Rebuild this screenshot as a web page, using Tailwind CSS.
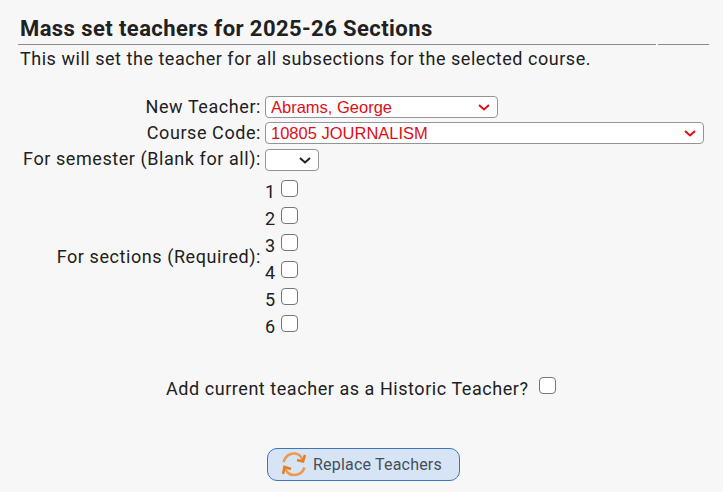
<!DOCTYPE html>
<html lang="en">
<head>
  <meta charset="UTF-8" />
  <title>Mass set teachers</title>
  <script src="https://cdn.jsdelivr.net/npm/@tailwindcss/browser@4"></script>
</head>
<body class="bg-[#f7f7f7] text-[#212121] font-['Roboto',sans-serif] w-[723px] h-[492px] overflow-hidden">

  <div class="pt-[15px]">
    <!-- Heading -->
    <h1 class="pl-[20px] text-[22px] leading-[28px] font-bold tracking-[0.42px]">Mass set teachers for 2025-26 Sections</h1>
    <div class="flex gap-[2px] pl-[18px] h-px mt-px">
      <div class="w-[638px] bg-[#8a8a8a]"></div>
      <div class="w-[51px] bg-[#8a8a8a]"></div>
    </div>
    <p class="pl-[20px] mt-[3px] text-[18px] leading-[22px] tracking-[0.53px]">This will set the teacher for all subsections for the selected course.</p>

    <!-- Form -->
    <form class="mt-[26px] grid grid-cols-[261px_1fr] gap-x-[4px] text-[18px] tracking-[0.57px]">
      <label class="text-right leading-[22px] h-[26px]">New Teacher:</label>
      <div class="relative w-[233px] h-[22px]">
        <select class="block appearance-none w-full h-full bg-white border border-[#949494] rounded-[4px] pl-[5px] text-[#e00d14] text-[16.5px] tracking-normal font-['Liberation_Sans',sans-serif] leading-[20px]">
          <option>Abrams, George</option>
        </select>
        <svg class="absolute right-[8px] top-[8px] w-[12px] h-[7px]" viewBox="0 0 12 7" fill="none" stroke="#e00d14" stroke-width="2"><path d="M1 1l5 4.5L11 1"/></svg>
      </div>

      <label class="text-right leading-[22px] h-[26px]">Course Code:</label>
      <div class="relative w-[439px] h-[22px]">
        <select class="block appearance-none w-full h-full bg-white border border-[#949494] rounded-[4px] pl-[5px] text-[#e00d14] text-[16.5px] tracking-normal font-['Liberation_Sans',sans-serif] leading-[20px]">
          <option>10805 JOURNALISM</option>
        </select>
        <svg class="absolute right-[8px] top-[8px] w-[12px] h-[7px]" viewBox="0 0 12 7" fill="none" stroke="#e00d14" stroke-width="2"><path d="M1 1l5 4.5L11 1"/></svg>
      </div>

      <label class="text-right leading-[22px] h-[26px]">For semester (Blank for all):</label>
      <div class="relative w-[54px] h-[22px] mt-px">
        <select class="block appearance-none w-full h-full bg-white border border-[#949494] rounded-[4px]"></select>
        <svg class="absolute right-[8px] top-[8px] w-[12px] h-[7px]" viewBox="0 0 12 7" fill="none" stroke="#212121" stroke-width="2"><path d="M1 1l5 4.5L11 1"/></svg>
      </div>

      <label class="self-center text-right leading-[22px] mb-[2px]">For sections (Required):</label>
      <div class="flex flex-col pt-[6px]">
        <div class="flex items-start gap-[6px] h-[27px]"><span class="leading-[22px] w-[10px] mt-px">1</span><input type="checkbox" class="appearance-none w-[17px] h-[17px] bg-white border-[1.5px] border-[#767676] rounded-[4px]" /></div>
        <div class="flex items-start gap-[6px] h-[27px]"><span class="leading-[22px] w-[10px] mt-px">2</span><input type="checkbox" class="appearance-none w-[17px] h-[17px] bg-white border-[1.5px] border-[#767676] rounded-[4px]" /></div>
        <div class="flex items-start gap-[6px] h-[27px]"><span class="leading-[22px] w-[10px] mt-px">3</span><input type="checkbox" class="appearance-none w-[17px] h-[17px] bg-white border-[1.5px] border-[#767676] rounded-[4px]" /></div>
        <div class="flex items-start gap-[6px] h-[27px]"><span class="leading-[22px] w-[10px] mt-px">4</span><input type="checkbox" class="appearance-none w-[17px] h-[17px] bg-white border-[1.5px] border-[#767676] rounded-[4px]" /></div>
        <div class="flex items-start gap-[6px] h-[27px]"><span class="leading-[22px] w-[10px] mt-px">5</span><input type="checkbox" class="appearance-none w-[17px] h-[17px] bg-white border-[1.5px] border-[#767676] rounded-[4px]" /></div>
        <div class="flex items-start gap-[6px] h-[27px]"><span class="leading-[22px] w-[10px] mt-px">6</span><input type="checkbox" class="appearance-none w-[17px] h-[17px] bg-white border-[1.5px] border-[#767676] rounded-[4px]" /></div>
      </div>
    </form>

    <!-- Historic teacher -->
    <div class="mt-[35px] pl-[166px] flex items-start gap-[10px] text-[18px] tracking-[0.55px] h-[22px]">
      <span class="leading-[22px] mt-[1px]">Add current teacher as a Historic Teacher?</span>
      <input type="checkbox" class="appearance-none w-[17px] h-[17px] bg-white border-[1.5px] border-[#767676] rounded-[4px]" />
    </div>

    <!-- Submit -->
    <div class="mt-[49px] pl-[267px]">
      <button type="button" class="flex items-center w-[193px] h-[33px] pl-[14px] gap-[7px] bg-[#d6e4f5] border border-[#3d76b8] rounded-[10px] text-[#44505c] text-[16px] tracking-[0.2px]">
        <svg class="w-[24px] h-[25px]" viewBox="4 4 24 25" fill="none" stroke-width="2.6">
          <path stroke="#eb9a4e" d="M5.5 14C7 8 12 5 17 5.5C21 6 23.5 8.5 24.5 12"/>
          <path stroke="#e57e22" d="M27 7L25 13.5L19 12"/>
          <path stroke="#eb9a4e" d="M26.5 19.5C25 24 21 27 16 27C12 27 9 25 7.5 21"/>
          <path stroke="#e57e22" d="M5 26L6.5 19L13 21"/>
        </svg>
        <span>Replace Teachers</span>
      </button>
    </div>
  </div>
</body>
</html>
